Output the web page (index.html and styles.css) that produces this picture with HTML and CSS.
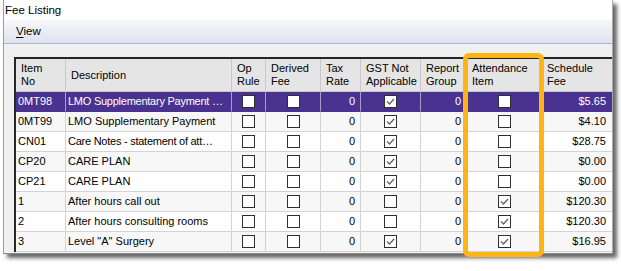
FILE: index.html
```html
<!DOCTYPE html>
<html lang="en">
<head>
    <meta charset="UTF-8">
    <title>Fee Listing</title>
    <link rel="stylesheet" href="styles.css">
</head>
<body>
  <div class="window">
    <div class="titlebar">Fee Listing</div>
    <div class="menubar">
      <span class="menu-item"><u>V</u>iew</span>
    </div>

    <div class="content">
      <table class="grid">
        <thead>
          <tr>
            <th class="c-item">Item<br>No</th>
            <th class="c-desc">Description</th>
            <th class="c-op">Op<br>Rule</th>
            <th class="c-derived">Derived<br>Fee</th>
            <th class="c-tax">Tax<br>Rate</th>
            <th class="c-gst">GST Not<br>Applicable</th>
            <th class="c-report">Report<br>Group</th>
            <th class="c-attend">Attendance<br>Item</th>
            <th class="c-fee">Schedule<br>Fee</th>
          </tr>
        </thead>
        <tbody>
          <tr class="selected">
            <td>0MT98</td>
            <td class="clip">LMO Supplementary Payment …</td>
            <td class="box"><span class="check"></span></td>
            <td class="box"><span class="check"></span></td>
            <td class="num">0</td>
            <td class="box"><span class="check"><svg viewBox="0 0 11 11"><polyline points="2,5.5 4.5,8 9,3"/></svg></span></td>
            <td class="num">0</td>
            <td class="box"><span class="check"></span></td>
            <td class="num money">$5.65</td>
          </tr>
          <tr>
            <td>0MT99</td>
            <td>LMO Supplementary Payment</td>
            <td class="box"><span class="check"></span></td>
            <td class="box"><span class="check"></span></td>
            <td class="num">0</td>
            <td class="box"><span class="check"><svg viewBox="0 0 11 11"><polyline points="2,5.5 4.5,8 9,3"/></svg></span></td>
            <td class="num">0</td>
            <td class="box"><span class="check"></span></td>
            <td class="num money">$4.10</td>
          </tr>
          <tr>
            <td>CN01</td>
            <td class="clip">Care Notes - statement of att…</td>
            <td class="box"><span class="check"></span></td>
            <td class="box"><span class="check"></span></td>
            <td class="num">0</td>
            <td class="box"><span class="check"><svg viewBox="0 0 11 11"><polyline points="2,5.5 4.5,8 9,3"/></svg></span></td>
            <td class="num">0</td>
            <td class="box"><span class="check"></span></td>
            <td class="num money">$28.75</td>
          </tr>
          <tr>
            <td>CP20</td>
            <td>CARE PLAN</td>
            <td class="box"><span class="check"></span></td>
            <td class="box"><span class="check"></span></td>
            <td class="num">0</td>
            <td class="box"><span class="check"><svg viewBox="0 0 11 11"><polyline points="2,5.5 4.5,8 9,3"/></svg></span></td>
            <td class="num">0</td>
            <td class="box"><span class="check"></span></td>
            <td class="num money">$0.00</td>
          </tr>
          <tr>
            <td>CP21</td>
            <td>CARE PLAN</td>
            <td class="box"><span class="check"></span></td>
            <td class="box"><span class="check"></span></td>
            <td class="num">0</td>
            <td class="box"><span class="check"><svg viewBox="0 0 11 11"><polyline points="2,5.5 4.5,8 9,3"/></svg></span></td>
            <td class="num">0</td>
            <td class="box"><span class="check"></span></td>
            <td class="num money">$0.00</td>
          </tr>
          <tr>
            <td>1</td>
            <td>After hours call out</td>
            <td class="box"><span class="check"></span></td>
            <td class="box"><span class="check"></span></td>
            <td class="num">0</td>
            <td class="box"><span class="check"></span></td>
            <td class="num">0</td>
            <td class="box"><span class="check"><svg viewBox="0 0 11 11"><polyline points="2,5.5 4.5,8 9,3"/></svg></span></td>
            <td class="num money">$120.30</td>
          </tr>
          <tr>
            <td>2</td>
            <td>After hours consulting rooms</td>
            <td class="box"><span class="check"></span></td>
            <td class="box"><span class="check"></span></td>
            <td class="num">0</td>
            <td class="box"><span class="check"></span></td>
            <td class="num">0</td>
            <td class="box"><span class="check"><svg viewBox="0 0 11 11"><polyline points="2,5.5 4.5,8 9,3"/></svg></span></td>
            <td class="num money">$120.30</td>
          </tr>
          <tr>
            <td>3</td>
            <td>Level "A" Surgery</td>
            <td class="box"><span class="check"></span></td>
            <td class="box"><span class="check"></span></td>
            <td class="num">0</td>
            <td class="box"><span class="check"><svg viewBox="0 0 11 11"><polyline points="2,5.5 4.5,8 9,3"/></svg></span></td>
            <td class="num">0</td>
            <td class="box"><span class="check"><svg viewBox="0 0 11 11"><polyline points="2,5.5 4.5,8 9,3"/></svg></span></td>
            <td class="num money">$16.95</td>
          </tr>
        </tbody>
      </table>
    </div>
  </div>

  <!-- annotation box drawn over the Attendance Item column -->
  <div class="highlight"></div>
</body>
</html>
```

FILE: styles.css
```css
* {
   box-sizing: border-box;
}

body {
   margin: 0;
   background: #fff;
   font-family: 'Liberation Sans', Arial, sans-serif;
   font-size: 11px;
   color: #000;
   position: relative;
   height: 271px;
}

.window {
   margin-left: 3px;
   width: 610px;
   height: 254px;
   background: #f0f0f0;
   border-left: 1px solid #9c9c9c;
   border-right: 1px solid #a8a8a8;
   border-bottom: 1px solid #8c8c8c;
   box-shadow: 4px 4px 4px rgba(0, 0, 0, 0.6);
   overflow: hidden;
}

.titlebar {
   height: 20px;
   line-height: 20px;
   padding-left: 1px;
   background: #fff;
   font-size: 11.5px;
}

.menubar {
   height: 24px;
   padding-left: 12px;
   line-height: 23px;
   font-size: 11.5px;
   background: linear-gradient(#f7f8fb, #e9ecf3 55%, #dfe3ee);
   border-bottom: 1px solid #a9b6d2;
}

.menu-item u {
   text-decoration-thickness: 1px;
   text-underline-offset: 2px;
}

.content {
   padding: 13px 0 0 10px;
}

/* grid */

.grid {
   table-layout: fixed;
   width: 598px;
   border-collapse: separate;
   border-spacing: 0;
   border-top: 2px solid #262626;
   border-left: 2px solid #262626;
}

.grid th,
.grid td {
   border-right: 1px solid #d3d3d3;
   border-bottom: 1px solid #d3d3d3;
   white-space: nowrap;
   overflow: hidden;
}

.grid th:last-child,
.grid td:last-child {
   border-right: none;
}

.grid th {
   height: 33px;
   padding: 0 0 0 5px;
   font-weight: normal;
   text-align: left;
   line-height: 13px;
   background: #e5e5e5;
   border-right-color: #c8c8c8;
   border-bottom-color: #c8c8c8;
}

.c-item { width: 50px; }
.c-desc { width: 166px; }
.c-op { width: 34px; }
.c-derived { width: 55px; }
.c-tax { width: 40px; }
.c-gst { width: 60px; }
.c-report { width: 46px; }
.c-attend { width: 75px; }
.c-fee { width: 70px; }

.grid td {
   height: 20px;
   padding: 0 0 0 2px;
   line-height: 19px;
   background: #fff;
}

.grid td.clip {
   letter-spacing: -0.25px;
}

.grid tbody tr:nth-child(even) td {
   background: #f7f7f7;
}

.grid td.num {
   text-align: right;
   padding: 0 5px 0 0;
}

.grid td.money {
   padding-right: 6px;
}

.grid td.box {
   padding: 0;
   text-align: center;
}

.check {
   display: inline-block;
   width: 13px;
   height: 13px;
   border: 1px solid #2e2e2e;
   background: #fff;
   vertical-align: middle;
   margin-top: -2px;
}

.check svg {
   display: block;
   width: 11px;
   height: 11px;
   fill: none;
   stroke: #666;
   stroke-width: 1.4;
}

.grid tr.selected td {
   background: #4a3291;
   color: #fff;
   border-right-color: #a69dcb;
   border-bottom-color: #4a3291;
}

.grid tr.selected td:last-child {
   border-right: none;
}

.highlight {
   position: absolute;
   left: 463px;
   top: 53px;
   width: 81px;
   height: 204px;
   border: 5px solid #fdb414;
   border-radius: 6px;
}
```
